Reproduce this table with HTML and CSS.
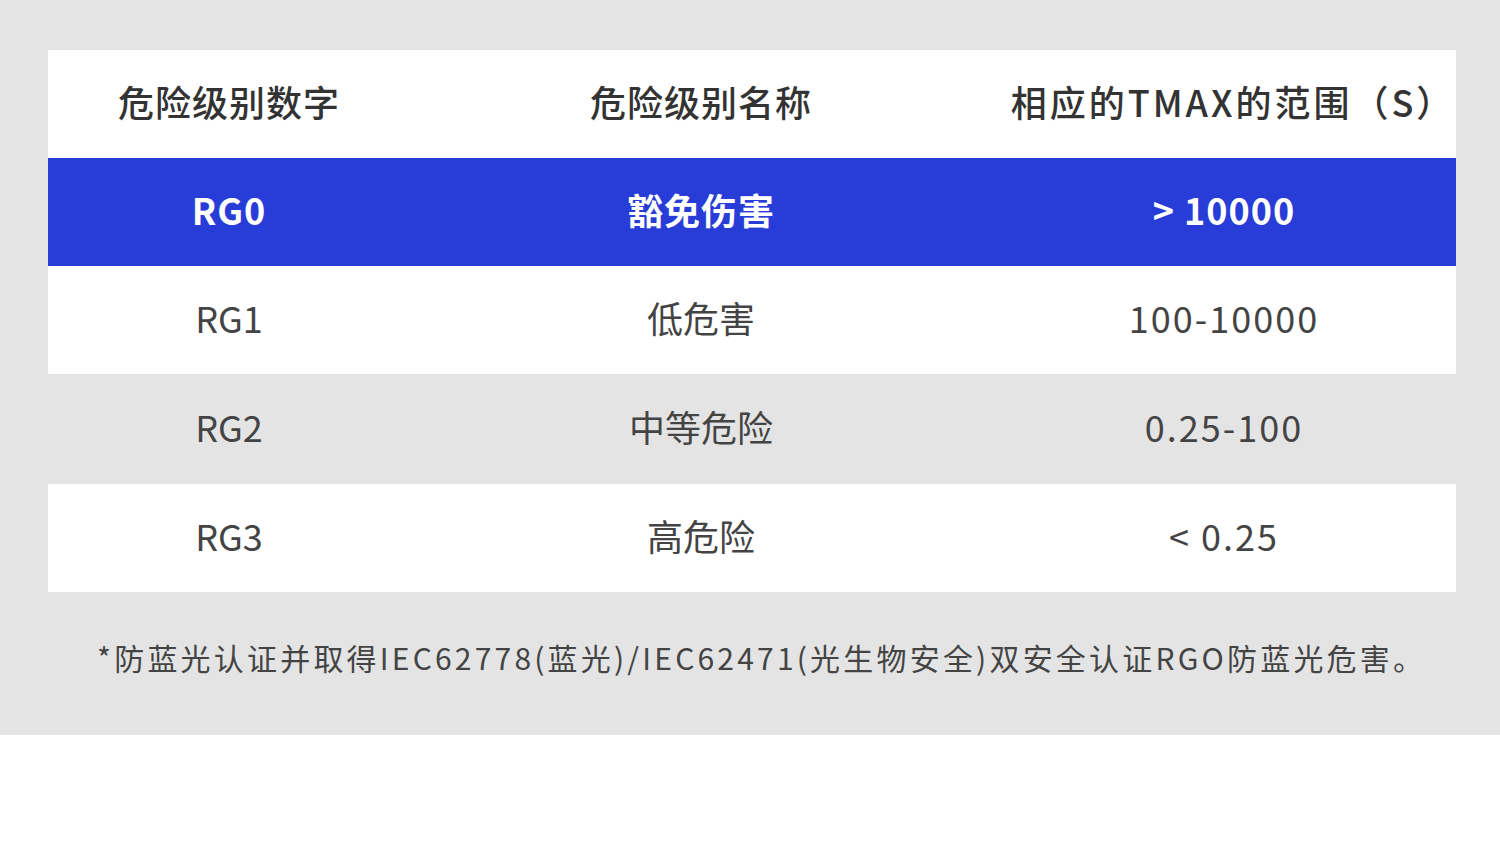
FILE: index.html
```html
<!DOCTYPE html>
<html lang="zh">
<head>
<meta charset="utf-8">
<link rel="stylesheet" href="styles.css">
</head>
<body>
<div class="panel">
  <div class="table">
    <div class="row head">
      <div class="c1">危险级别数字</div>
      <div class="c2">危险级别名称</div>
      <div class="c3">相应的TMAX的范围（S）</div>
    </div>
    <div class="row hi">
      <div class="c1">RG0</div>
      <div class="c2">豁免伤害</div>
      <div class="c3">&gt; 10000</div>
    </div>
    <div class="row white">
      <div class="c1">RG1</div>
      <div class="c2">低危害</div>
      <div class="c3">100-10000</div>
    </div>
    <div class="row gray tall">
      <div class="c1">RG2</div>
      <div class="c2">中等危险</div>
      <div class="c3">0.25-100</div>
    </div>
    <div class="row white">
      <div class="c1">RG3</div>
      <div class="c2">高危险</div>
      <div class="c3">&lt; 0.25</div>
    </div>
  </div>
  <p class="note">*防蓝光认证并取得IEC62778(蓝光)/IEC62471(光生物安全)双安全认证RGO防蓝光危害。</p>
</div>
</body>
</html>
```
FILE: styles.css
```css
html, body {
  margin: 0;
  padding: 0;
  background: #ffffff;
}
body {
  font-family: "Noto Sans CJK SC", "Noto Sans", sans-serif;
  color: #3a3a3a;
}
.panel {
  background: #e4e4e4;
  height: 735px;
  box-sizing: border-box;
  padding: 50px 44px 0 48px;
}
.table {
  display: flex;
  flex-direction: column;
}
.row {
  display: grid;
  grid-template-columns: 362px 582px 464px;
  height: 108px;
  box-sizing: border-box;
  padding-bottom: 6px;
  align-items: center;
  text-align: center;
  font-size: 36px;
  line-height: 1;
}
.row.tall { height: 110px; }
.row .c3 { letter-spacing: 2px; }
.head {
  background: #ffffff;
  color: #333333;
  font-weight: 500;
  letter-spacing: 1px;
}
.head .c3 { letter-spacing: 3px; padding-left: 18px; }
.hi {
  background: #283cd8;
  color: #ffffff;
  font-weight: 700;
  letter-spacing: 1px;
}
.hi .c3 { letter-spacing: 1px; }
.white { background: #ffffff; color: #444444; }
.gray { background: #e4e4e4; color: #444444; }
.note {
  margin: 44px 0 0 49px;
  font-size: 30px;
  letter-spacing: 3.2px;
  color: #444444;
  line-height: 1.4;
  white-space: nowrap;
}
```
